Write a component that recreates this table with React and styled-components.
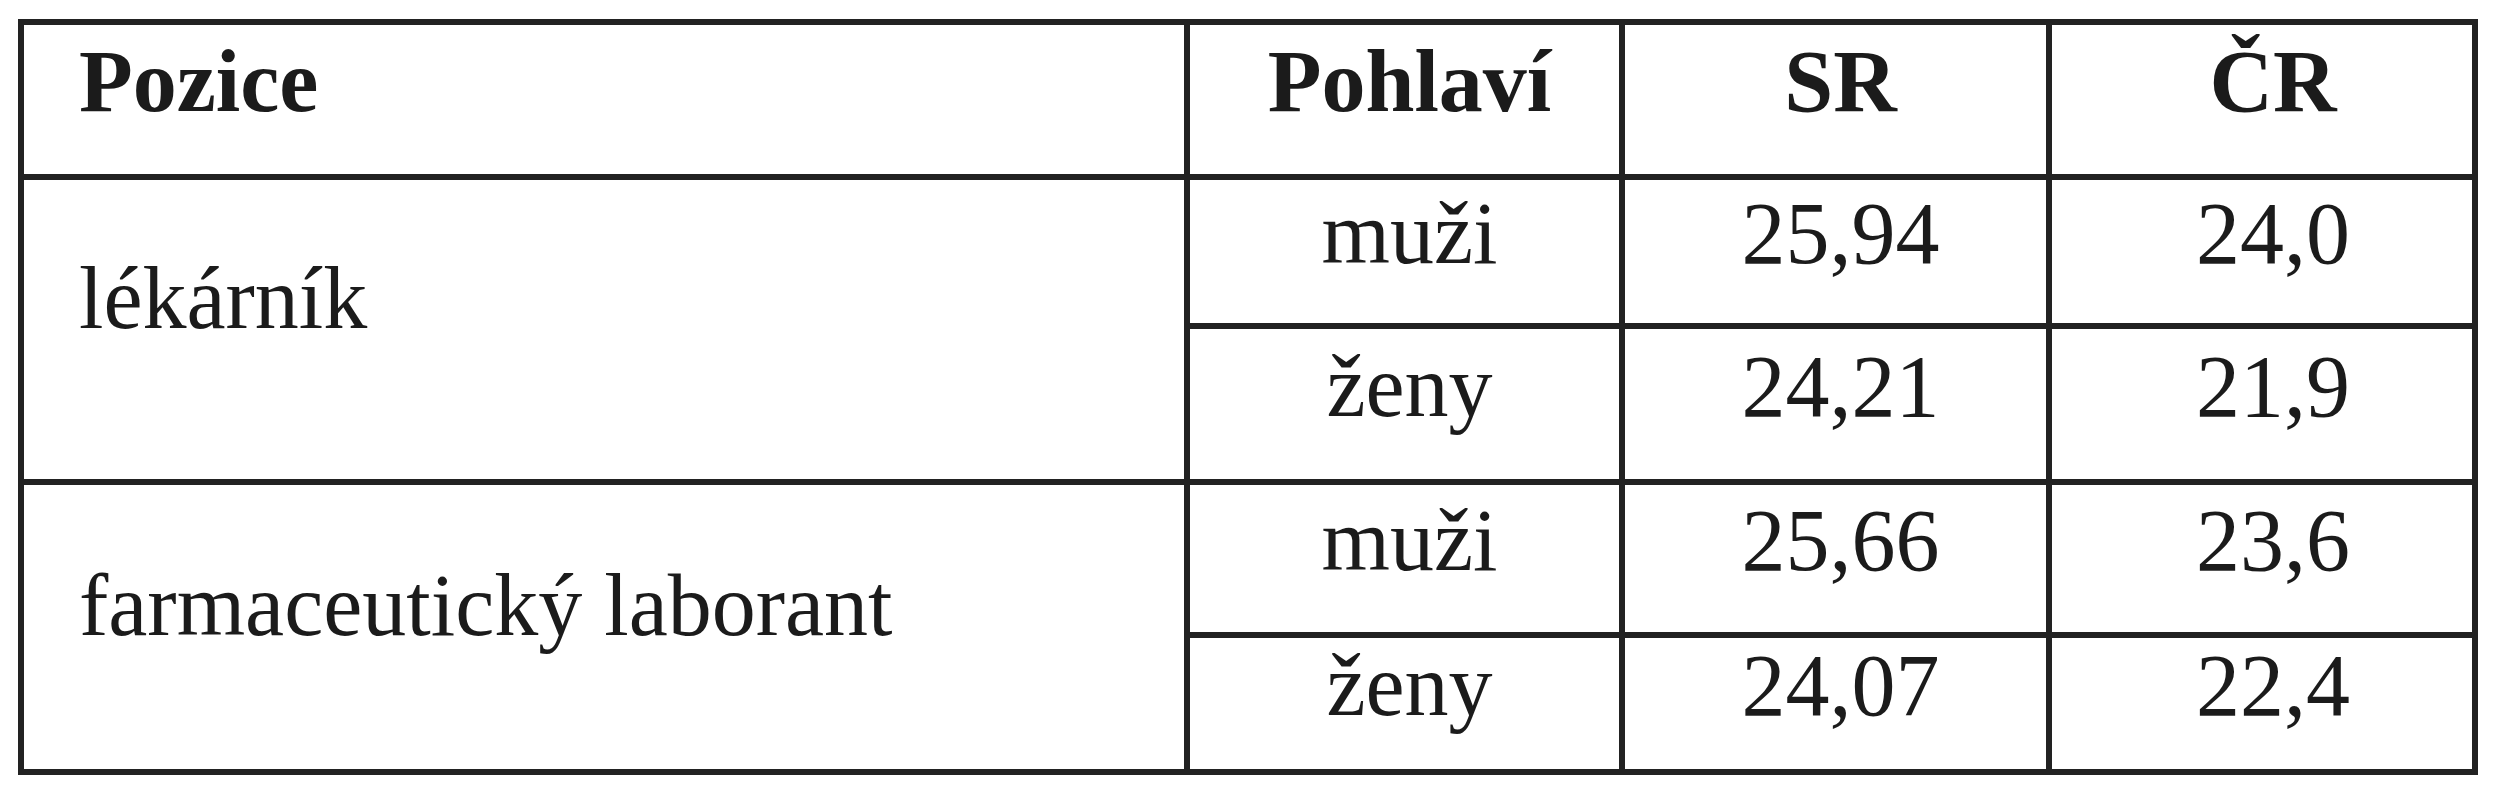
import React from 'react'
import styled, { createGlobalStyle } from 'styled-components'

const GlobalStyle = createGlobalStyle`
  html, body {
    margin: 0;
    padding: 0;
    background: #fff;
  }
  body {
    font-family: "Liberation Serif", "Times New Roman", serif;
    color: #1b1b1b;
  }
`

const Page = styled.div`
  padding: 19px 0 0 18px;
`

// the lines of the table are the dark background showing through the gaps
const Table = styled.div`
  display: grid;
  width: 2460px;
  box-sizing: border-box;
  grid-template-columns: 1160px 429px 421px 420px;
  grid-template-rows: 149px 143px 150px 147px 131px;
  gap: 6px;
  padding: 6px;
  background: #222;
`

const Cell = styled.div`
  display: flex;
  align-items: center;
  justify-content: ${p => (p.$left ? 'flex-start' : 'center')};
  box-sizing: border-box;
  padding: 0 0 ${p => p.$lift || 35}px ${p => p.$indent || 10}px;
  background: #fff;
  font-size: 88px;
  line-height: 1;
  font-weight: ${p => (p.$head ? 700 : 400)};
  white-space: nowrap;
  grid-row: ${p => (p.$span ? `span ${p.$span}` : 'auto')};
`

const groups = [
  {
    pos:  'lékárník',
    lift: 62,
    rows: [
      ['muži', '25,94', '24,0'],
      ['ženy', '24,21', '21,9'],
    ],
  },
  {
    pos:  'farmaceutický laborant',
    lift: 43,
    rows: [
      ['muži', '25,66', '23,6'],
      ['ženy', '24,07', '22,4'],
    ],
  },
]

const App = () => (
  <Page>
    <GlobalStyle />
    <Table>
      <Cell $head $left $indent={55}>Pozice</Cell>
      <Cell $head>Pohlaví</Cell>
      <Cell $head>SR</Cell>
      <Cell $head $indent={22}>ČR</Cell>

      {groups.map(g => (
        <React.Fragment key={g.pos}>
          <Cell $left $indent={55} $span={2} $lift={g.lift}>{g.pos}</Cell>
          {g.rows.map(([sex, sr, cr]) => (
            <React.Fragment key={sex}>
              <Cell>{sex}</Cell>
              <Cell>{sr}</Cell>
              <Cell $indent={22}>{cr}</Cell>
            </React.Fragment>
          ))}
        </React.Fragment>
      ))}
    </Table>
  </Page>
)

export default App
